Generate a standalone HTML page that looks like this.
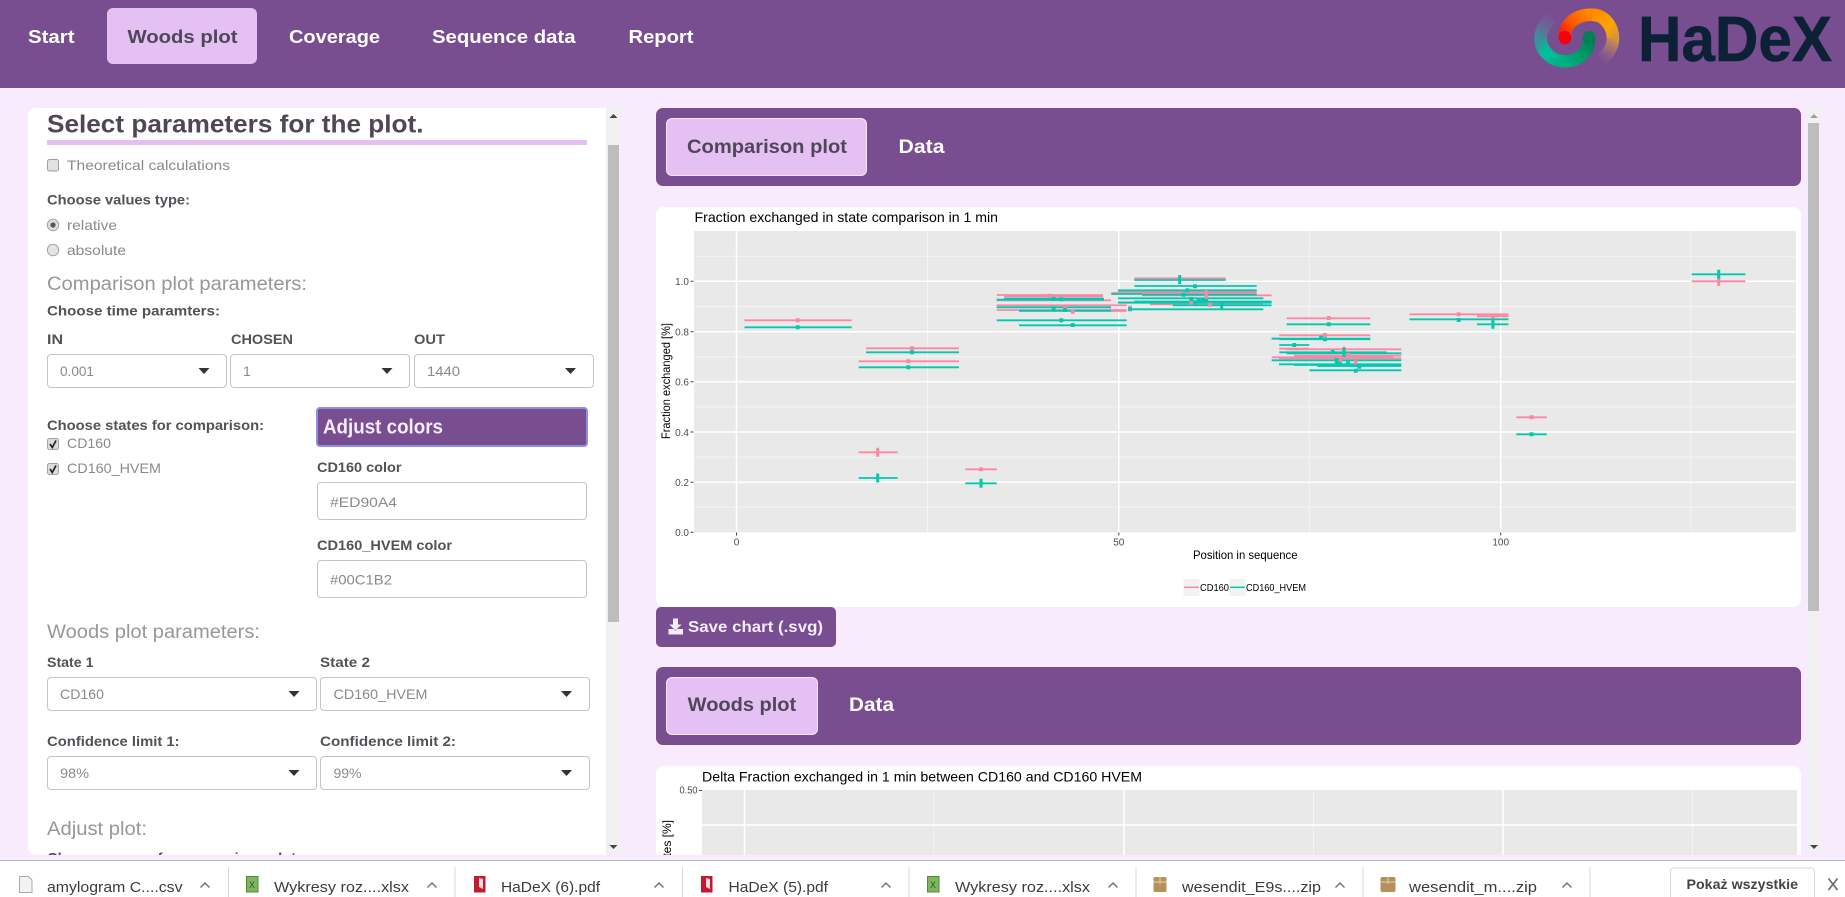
<!DOCTYPE html>
<html lang="en"><head><meta charset="utf-8"><title>HaDeX</title>
<style>
html,body{margin:0;padding:0;width:1845px;height:897px;overflow:hidden;background:#f8ebfe}
body{position:relative;font-family:"Liberation Sans",sans-serif}
.a{position:absolute;box-sizing:border-box}
.p{background:#784e90}
.l{background:#e4c1f2}
.tab{background:#e4c1f2;border:1px solid #f3e4f9;border-radius:6px}
.box{background:#fff;border:1px solid #c4c4c4;border-radius:4px}
.sb{background:#f1f1f1}.th{background:#bdbdbd}
svg{position:absolute;left:0;top:0;display:block}
svg text{font-family:"Liberation Sans",sans-serif;font-size:14px;fill:#8a8a8a}
.b{font-weight:700;fill:#565058}
.h{font-size:19px;fill:#979797}
.n{font-size:18.5px;font-weight:700;fill:#fff}
.d{fill:#50465a}
.g{font-size:10px;fill:#4d4d4d}
.k{fill:#000}
.s{font-size:15px;fill:#3c3c3c}
</style></head><body>

<div class="a p" style="left:0;top:0;width:1845px;height:88px"></div>
<div class="a l" style="left:107px;top:8px;width:150px;height:56px;border-radius:6px"></div>

<div class="a" style="left:28px;top:108px;width:580px;height:747px;background:#fff;border-radius:8px 0 0 8px"></div>
<div class="a sb" style="left:606px;top:108px;width:15px;height:747px"></div>
<div class="a th" style="left:608px;top:145px;width:11px;height:477px"></div>
<div class="a l" style="left:47px;top:140px;width:540px;height:5px"></div>

<div class="a box" style="left:47px;top:354px;width:180px;height:34px"></div>
<div class="a box" style="left:230px;top:354px;width:180px;height:34px"></div>
<div class="a box" style="left:414px;top:354px;width:180px;height:34px"></div>
<div class="a p" style="left:316px;top:407px;width:272px;height:40px;border:2px solid #8f8fe6;border-radius:4px"></div>
<div class="a box" style="left:317px;top:482px;width:270px;height:38px"></div>
<div class="a box" style="left:317px;top:560px;width:270px;height:38px"></div>
<div class="a box" style="left:47px;top:677px;width:270px;height:34px"></div>
<div class="a box" style="left:320px;top:677px;width:270px;height:34px"></div>
<div class="a box" style="left:47px;top:756px;width:270px;height:34px"></div>
<div class="a box" style="left:320px;top:756px;width:270px;height:34px"></div>

<div class="a p" style="left:656px;top:108px;width:1145px;height:78px;border-radius:7px"></div>
<div class="a tab" style="left:666px;top:118px;width:201px;height:58px"></div>
<div class="a" style="left:656px;top:207px;width:1145px;height:400px;background:#fff;border-radius:8px"></div>
<div class="a p" style="left:656px;top:607px;width:180px;height:40px;border-radius:5px"></div>
<div class="a p" style="left:656px;top:667px;width:1145px;height:78px;border-radius:7px"></div>
<div class="a tab" style="left:666px;top:677px;width:152px;height:58px"></div>
<div class="a" style="left:656px;top:766px;width:1145px;height:94px;background:#fff;border-radius:8px 8px 0 0"></div>
<div class="a sb" style="left:1807px;top:108px;width:14px;height:747px"></div>
<div class="a th" style="left:1808px;top:123px;width:11px;height:488px"></div>

<svg width="1845" height="897" viewBox="0 0 1845 897">
<text class="n" x="28" y="43" textLength="46.5" lengthAdjust="spacingAndGlyphs">Start</text>
<text class="n d" x="127.5" y="43" textLength="110" lengthAdjust="spacingAndGlyphs" style="fill:#50465a">Woods plot</text>
<text class="n" x="289" y="43" textLength="91" lengthAdjust="spacingAndGlyphs">Coverage</text>
<text class="n" x="432" y="43" textLength="143.5" lengthAdjust="spacingAndGlyphs">Sequence data</text>
<text class="n" x="628.5" y="43" textLength="65" lengthAdjust="spacingAndGlyphs">Report</text>
<text x="1638" y="61" textLength="194" lengthAdjust="spacingAndGlyphs" style="font-family:'Liberation Sans',sans-serif;font-weight:700;font-size:64px;fill:#0c2136;stroke:#0c2136;stroke-width:.6">HaDeX</text>

<!-- left panel text -->
<text x="47" y="132.5" textLength="376.5" lengthAdjust="spacingAndGlyphs" style="font-size:25px;font-weight:700;fill:#4f4754">Select parameters for the plot.</text>
<rect x="47.5" y="159.5" width="11" height="11.5" rx="2" fill="#e2e2e2" stroke="#9d9d9d"/>
<text x="67" y="170" textLength="163" lengthAdjust="spacingAndGlyphs">Theoretical calculations</text>
<text class="b" x="47" y="204.5" textLength="143" lengthAdjust="spacingAndGlyphs">Choose values type:</text>
<circle cx="53" cy="225" r="5.7" fill="#dedede" stroke="#a3a3a3"/><circle cx="53" cy="225" r="2.6" fill="#555"/>
<text x="67" y="230" textLength="50" lengthAdjust="spacingAndGlyphs">relative</text>
<circle cx="53" cy="250" r="5.7" fill="#e4e4e4" stroke="#a3a3a3"/>
<text x="67" y="255" textLength="59" lengthAdjust="spacingAndGlyphs">absolute</text>
<text class="h" x="47" y="290" textLength="260" lengthAdjust="spacingAndGlyphs">Comparison plot parameters:</text>
<text class="b" x="47" y="315.7" textLength="173" lengthAdjust="spacingAndGlyphs">Choose time paramters:</text>
<text class="b" x="47" y="344" textLength="16" lengthAdjust="spacingAndGlyphs">IN</text>
<text class="b" x="231" y="344" textLength="62" lengthAdjust="spacingAndGlyphs">CHOSEN</text>
<text class="b" x="414" y="344" textLength="31" lengthAdjust="spacingAndGlyphs">OUT</text>
<text x="60" y="376" textLength="34" lengthAdjust="spacingAndGlyphs">0.001</text>
<text x="243" y="376">1</text>
<text x="427" y="376" textLength="33" lengthAdjust="spacingAndGlyphs">1440</text>
<path d="M198.5 368h11l-5.5 6zM381.5 368h11l-5.5 6zM565 368h11l-5.5 6zM288.5 691h11l-5.5 6zM561 691h11l-5.5 6zM288.5 770h11l-5.5 6zM561 770h11l-5.5 6z" fill="#333"/>
<text class="b" x="47" y="430" textLength="217" lengthAdjust="spacingAndGlyphs">Choose states for comparison:</text>
<rect x="47.5" y="438.5" width="11" height="11" rx="2" fill="#dcdcdc" stroke="#a3a3a3"/>
<path d="M50 444l2.3 3.5 3.7-7" fill="none" stroke="#222" stroke-width="1.7"/>
<text x="67" y="448" textLength="44" lengthAdjust="spacingAndGlyphs">CD160</text>
<rect x="47.5" y="463.5" width="11" height="11" rx="2" fill="#dcdcdc" stroke="#a3a3a3"/>
<path d="M50 469l2.3 3.5 3.7-7" fill="none" stroke="#222" stroke-width="1.7"/>
<text x="67" y="473" textLength="94" lengthAdjust="spacingAndGlyphs">CD160_HVEM</text>
<text x="323" y="433.5" textLength="120" lengthAdjust="spacingAndGlyphs" style="font-size:20px;font-weight:700;fill:#f6ecfb">Adjust colors</text>
<text class="b" x="317" y="472" textLength="84.5" lengthAdjust="spacingAndGlyphs">CD160 color</text>
<text x="330" y="507" textLength="67" lengthAdjust="spacingAndGlyphs">#ED90A4</text>
<text class="b" x="317" y="550" textLength="135" lengthAdjust="spacingAndGlyphs">CD160_HVEM color</text>
<text x="330" y="584.5" textLength="62" lengthAdjust="spacingAndGlyphs">#00C1B2</text>
<text class="h" x="47" y="638" textLength="213" lengthAdjust="spacingAndGlyphs">Woods plot parameters:</text>
<text class="b" x="47" y="667" textLength="46.5" lengthAdjust="spacingAndGlyphs">State 1</text>
<text class="b" x="320" y="667" textLength="50" lengthAdjust="spacingAndGlyphs">State 2</text>
<text x="60" y="699" textLength="44" lengthAdjust="spacingAndGlyphs">CD160</text>
<text x="333.5" y="699" textLength="94" lengthAdjust="spacingAndGlyphs">CD160_HVEM</text>
<text class="b" x="47" y="746" textLength="132.6" lengthAdjust="spacingAndGlyphs">Confidence limit 1:</text>
<text class="b" x="320" y="746" textLength="136" lengthAdjust="spacingAndGlyphs">Confidence limit 2:</text>
<text x="60" y="778" textLength="29" lengthAdjust="spacingAndGlyphs">98%</text>
<text x="333.5" y="778" textLength="28" lengthAdjust="spacingAndGlyphs">99%</text>
<text class="h" x="47" y="835" textLength="100" lengthAdjust="spacingAndGlyphs">Adjust plot:</text>
<text class="b" x="47" y="862.5" textLength="254" lengthAdjust="spacingAndGlyphs">Choose ranges for comparison plot:</text>

<!-- scrollbar arrows -->
<path d="M609.5 118h8l-4-4z" fill="#444"/><path d="M609.5 845h8l-4 4z" fill="#444"/>
<path d="M1810 118h8l-4-4z" fill="#a0a0a0"/><path d="M1810 845h8l-4 4z" fill="#444"/>

<!-- tabs right -->
<text class="d" x="687" y="153" textLength="160" lengthAdjust="spacingAndGlyphs" style="font-size:19px;font-weight:700;fill:#50465a">Comparison plot</text>
<text x="898.5" y="153" textLength="46" lengthAdjust="spacingAndGlyphs" style="font-size:19px;font-weight:700;fill:#fff">Data</text>
<text x="688" y="632" textLength="135" lengthAdjust="spacingAndGlyphs" style="font-size:16px;font-weight:700;fill:#f6ecfb">Save chart (.svg)</text>
<path d="M673 618.5h5v6h3.6l-6.1 6-6.1-6h3.6zM668.5 629h5l2 2 2-2h5.500v5.500h-14.500z" fill="#f6ecfb"/>
<text x="687.7" y="711" textLength="108.500" lengthAdjust="spacingAndGlyphs" style="font-size:19px;font-weight:700;fill:#50465a">Woods plot</text>
<text x="849" y="711" textLength="45" lengthAdjust="spacingAndGlyphs" style="font-size:19px;font-weight:700;fill:#fff">Data</text>

<!-- chart 1 -->
<text class="k" x="694.5" y="222" textLength="303.500" lengthAdjust="spacingAndGlyphs" style="fill:#000">Fraction exchanged in state comparison in 1 min</text>
<rect x="694" y="231" width="1102" height="301.300" fill="#e9e9e9"/>
<path d="M694 256.200H1796M694 306.500H1796M694 356.700H1796M694 406.900H1796M694 457.200H1796M694 507.200H1796M927.500 231V532.300M1309.400 231V532.300M1691 231V532.300" stroke="#f4f4f4" stroke-width="1"/>
<path d="M694 281.300H1796M694 331.700H1796M694 381.700H1796M694 432H1796M694 482.300H1796M736.500 231V532.300M1118.800 231V532.300M1500.700 231V532.300" stroke="#fff" stroke-width="1.500" fill="none"/>
<path d="M690.500 281.300h3M690.500 331.700h3M690.500 381.700h3M690.500 432h3M690.500 482.300h3M690.500 532.300h3M736.500 532.500v3M1118.800 532.500v3M1500.700 532.500v3" stroke="#444" stroke-width="1"/>
<g text-anchor="end">
<text class="g" x="689" y="285">1.0</text><text class="g" x="689" y="335.500">0.8</text><text class="g" x="689" y="385.500">0.6</text><text class="g" x="689" y="435.800">0.4</text><text class="g" x="689" y="486">0.2</text><text class="g" x="689" y="536">0.0</text>
</g>
<g text-anchor="middle">
<text class="g" x="736.500" y="545.500">0</text><text class="g" x="1118.800" y="545.500">50</text><text class="g" x="1500.700" y="545.500">100</text>
</g>
<text x="1193" y="559" textLength="104.500" lengthAdjust="spacingAndGlyphs" style="font-size:12px;fill:#000">Position in sequence</text>
<text transform="translate(670,439) rotate(-90)" textLength="116" lengthAdjust="spacingAndGlyphs" style="font-size:12px;fill:#000">Fraction exchanged [%]</text>

<g fill="none" stroke-width="1.800">
<path stroke="#fa88a4" d="M744.500 320.300H851.700M866 348.300H959M858.600 361.300H959M858.600 452.300H897.600M965.300 469.300H996.700M996.700 295H1103M1004 296.500H1103M996.700 300.300H1111M996.700 305.300H1126.700M996.700 310H1126.700M1019 311H1126.700M1134.300 278.300H1225.700M1118 291.700H1256.700M1111.300 293H1256.700M1142 295.300H1271.600M1118 302.300H1263M1150 304.300H1263M1286.700 318.300H1370.300M1279.300 335.300H1370.300M1271.700 338.500H1280M1279.300 348.700H1309.300M1286.700 349.300H1401.300M1294 355.700H1401.300M1271.700 357.300H1393.300M1279 358.300H1401.300M1409.400 314.300H1508.500M1477 316.300H1508.500M1516.300 417.300H1546.800M1691.600 281.300H1745.400"/>
<path stroke="#00c9b0" d="M744.500 327.300H851.700M866 352.300H959M858.600 367.300H959M858.600 478H897.600M965.300 483.300H996.700M1004 298.700H1104M996.700 299.700H1104M996.700 307.300H1111M1019 310.700H1111M996.700 320.300H1126.700M1019 325.300H1126.700M1134.300 280H1225.700M1134.300 286H1256.700M1118 290.300H1256.700M1111.300 294H1142M1142 294.700H1256.700M1118 298.300H1263.300M1134.300 301.500H1271.600M1118 302.700H1271.600M1172.700 305.300H1271.600M1130 309.300H1263.300M1286.700 324.300H1370.300M1271.700 338.700H1370.300M1279.300 339.200H1370.300M1279.300 345H1309.300M1279.300 352.300H1386.700M1286.700 353.300H1401.300M1271.700 360.300H1401.300M1279 364.300H1401.300M1294 365H1401.300M1317.300 366H1401.300M1309.300 370.300H1401.300M1409.400 319.300H1508.500M1477 324.300H1508.500M1516.300 434.300H1546.800M1691.600 274.300H1745.400"/>
<path stroke="#fa88a4" stroke-width="3.800" d="M797.700 318.300v4M912 346.300v4M908.300 359.300v4M981 467.300v4M1049.300 293.700v4M1065 305v4M1072.700 309.700v4M1130 305.700v4M1210 302.700v4M1191.300 300.700v4M1328.700 316v4M1325 333v4M1344 346.700v4M1348 353v4M1340 358.700v4M1355.700 360.300v4M1359.300 355.300v4M1458.700 312.300v4M1492.900 314.700v4M1531.600 415.300v4"/>
<path stroke="#fa88a4" stroke-width="3" d="M877.700 447.800v9M1206.300 290v10M1718.700 276.800v9"/>
<path stroke="#00c9b0" stroke-width="3.800" d="M797.700 325.300v4M912 350.300v4M908.300 365.300v4M1053.700 297v4M1061.300 297.300v4M1053.700 306.300v4M1065 308v4M1061.300 318.300v4M1072.700 323v4M1195 284.300v4M1187.300 288.300v4M1183.700 292.700v4M1191.300 297v4M1195 300.300v4M1198.700 298.700v4M1202.700 298v4M1206.300 299v4M1130 307.300v4M1328.700 322.300v4M1321 335.700v4M1325 337.300v4M1294.300 343v4M1332.700 350v4M1336.700 358v4M1336.700 362v4M1340 362v4M1348 361.300v4M1359.300 364.700v4M1355.700 368.700v4M1458.700 318v4M1531.600 432.300v4"/>
<path stroke="#00c9b0" stroke-width="3" d="M877.700 473.500v9M981 478.800v9M1179.700 275v9M1221.700 301v9M1344 348v9M1492.900 319.800v9M1718.700 269.800v9"/>
</g>

<!-- legend -->
<rect x="1183.500" y="579" width="16" height="17" fill="#f2f2f2"/><rect x="1229.500" y="579" width="16" height="17" fill="#f2f2f2"/>
<path d="M1184 587.300h15" stroke="#fa88a4" stroke-width="1.500"/><path d="M1230 587.300h15" stroke="#00c9b0" stroke-width="1.500"/>
<text x="1200" y="591" textLength="29" lengthAdjust="spacingAndGlyphs" style="font-size:10px;fill:#000">CD160</text>
<text x="1246" y="591" textLength="60" lengthAdjust="spacingAndGlyphs" style="font-size:10px;fill:#000">CD160_HVEM</text>

<!-- chart 2 -->
<text x="702" y="781.500" textLength="440" lengthAdjust="spacingAndGlyphs" style="fill:#000">Delta Fraction exchanged in 1 min between CD160 and CD160 HVEM</text>
<rect x="702" y="790" width="1095" height="70" fill="#e9e9e9"/>
<path d="M934 790v70M1313.500 790v70M1692.500 790v70" stroke="#f4f4f4" stroke-width="1"/>
<path d="M702 825H1797M744.500 790v70M1124 790v70M1503 790v70" stroke="#fff" stroke-width="1.500"/>
<path d="M699 790.500h3" stroke="#444"/>
<text x="679.500" y="793.500" textLength="18" lengthAdjust="spacingAndGlyphs" style="font-size:10px;fill:#4d4d4d">0.50</text>
<text transform="translate(671,820) rotate(-90)" text-anchor="end" style="font-size:12px;fill:#000">states [%]</text>
</svg>

<!-- logo -->
<svg width="120" height="80" viewBox="0 0 360 240" style="left:1530px;top:0">
<defs>
<linearGradient id="o1" gradientUnits="userSpaceOnUse" x1="105" y1="115" x2="185" y2="44"><stop offset="0" stop-color="#f51b10"/><stop offset=".45" stop-color="#f95a00"/><stop offset="1" stop-color="#ff8a00"/></linearGradient>
<linearGradient id="o2" gradientUnits="userSpaceOnUse" x1="185" y1="44" x2="250" y2="120"><stop offset="0" stop-color="#ff8a00"/><stop offset=".6" stop-color="#fda500"/><stop offset="1" stop-color="#d59440"/></linearGradient>
<linearGradient id="o3" gradientUnits="userSpaceOnUse" x1="250" y1="115" x2="218" y2="178"><stop offset="0" stop-color="#d59440"/><stop offset="1" stop-color="#a9738a" stop-opacity=".1"/></linearGradient>
<linearGradient id="g1" gradientUnits="userSpaceOnUse" x1="177" y1="113" x2="105" y2="184"><stop offset="0" stop-color="#007f55"/><stop offset=".5" stop-color="#009a68"/><stop offset="1" stop-color="#00ae80"/></linearGradient>
<linearGradient id="g2" gradientUnits="userSpaceOnUse" x1="105" y1="184" x2="32" y2="115"><stop offset="0" stop-color="#00ae80"/><stop offset=".6" stop-color="#00c09e"/><stop offset="1" stop-color="#3c8f9c"/></linearGradient>
<linearGradient id="g3" gradientUnits="userSpaceOnUse" x1="32" y1="115" x2="68" y2="50"><stop offset="0" stop-color="#3c8f9c"/><stop offset="1" stop-color="#7a6a9e" stop-opacity=".1"/></linearGradient>
</defs>
<g fill="none" stroke-width="38">
<path stroke="url(#g3)" d="M32 115C32 92 45 70 66 52"/>
<path stroke="url(#g2)" d="M105 184C62 184 32 150 32 115"/>
<path stroke="url(#g1)" d="M177 113C180 150 150 184 105 184"/>
<path stroke="url(#o3)" d="M249 115C249 140 235 160 216 178"/>
<path stroke="url(#o2)" d="M185 44C228 44 249 85 249 115"/>
<path stroke="url(#o1)" d="M105 113C102 70 140 44 185 44"/>
</g>
<ellipse cx="105" cy="113" rx="19" ry="20" fill="#f5000c"/>
<ellipse cx="177" cy="113" rx="19" ry="20" fill="#008152"/>
</svg>

<!-- bottom -->
<div class="a" style="left:0;top:855px;width:1845px;height:5px;background:#f8ebfe"></div>
<div class="a" style="left:0;top:860px;width:1845px;height:37px;background:#fff;border-top:1.5px solid #b9b5bb"></div>
<svg width="1845" height="897" viewBox="0 0 1845 897" style="pointer-events:none">
<path d="M228.500 867v30M455 867v30M682.500 867v30M909 867v30M1136 867v30M1363 867v30M1590 867v30" stroke="#d8d8d8"/>
<path d="M1670.500 897v-26a3 3 0 0 1 3-3h138a3 3 0 0 1 3 3v26" fill="#fff" stroke="#d6d6d6"/>
<path d="M19.500 876.500h9l3.500 3.500v12.500h-12.500z" fill="#f2f2f2" stroke="#a9a9a9"/>
<g fill="#7fb561" stroke="#4d8a3a"><rect x="246.500" y="876.500" width="11.500" height="15.500"/><rect x="927.500" y="876.500" width="11.500" height="15.500"/></g>
<text x="249" y="888" style="font-size:9px;fill:#1f5c16">X</text><text x="930" y="888" style="font-size:9px;fill:#1f5c16">X</text>
<g fill="#c21a30"><rect x="474" y="876" width="11.500" height="16.500"/><rect x="701" y="876" width="11.500" height="16.500"/></g>
<path d="M479 878l4 1v10l-4-2zM706 878l4 1v10l-4-2z" fill="#f7dcdc"/>
<g fill="#b4915c"><rect x="1153.500" y="877" width="13" height="15" rx="1.500"/><rect x="1380.500" y="877" width="15" height="15" rx="1.500"/></g>
<path d="M1153.500 882h13M1380.500 882h15M1160 877v7M1388 877v7" stroke="#e3d2ae" stroke-width="1"/>
<path d="M200.500 887.500l4.500-4.500 4.500 4.500M427.500 887.500l4.500-4.500 4.500 4.500M654.500 887.500l4.500-4.500 4.500 4.500M881.500 887.500l4.500-4.500 4.500 4.500M1108.500 887.500l4.500-4.500 4.500 4.500M1335.500 887.500l4.500-4.500 4.500 4.500M1562.500 887.500l4.500-4.500 4.500 4.500" fill="none" stroke="#777" stroke-width="1.500"/>
<text class="s" x="47" y="892" textLength="135.500" lengthAdjust="spacingAndGlyphs">amylogram C....csv</text>
<text class="s" x="274" y="892" textLength="135" lengthAdjust="spacingAndGlyphs">Wykresy roz....xlsx</text>
<text class="s" x="501" y="892" textLength="99" lengthAdjust="spacingAndGlyphs">HaDeX (6).pdf</text>
<text class="s" x="728.500" y="892" textLength="99.500" lengthAdjust="spacingAndGlyphs">HaDeX (5).pdf</text>
<text class="s" x="955" y="892" textLength="135" lengthAdjust="spacingAndGlyphs">Wykresy roz....xlsx</text>
<text class="s" x="1182" y="892" textLength="139" lengthAdjust="spacingAndGlyphs">wesendit_E9s....zip</text>
<text class="s" x="1409" y="892" textLength="128" lengthAdjust="spacingAndGlyphs">wesendit_m....zip</text>
<text x="1686.500" y="889" textLength="111.500" lengthAdjust="spacingAndGlyphs" style="font-size:14px;font-weight:700;fill:#444">Pokaż wszystkie</text>
<path d="M1828.500 878.500l9 11.500M1837.500 878.500l-9 11.500" stroke="#666" stroke-width="1.600"/>
</svg>
</body></html>
